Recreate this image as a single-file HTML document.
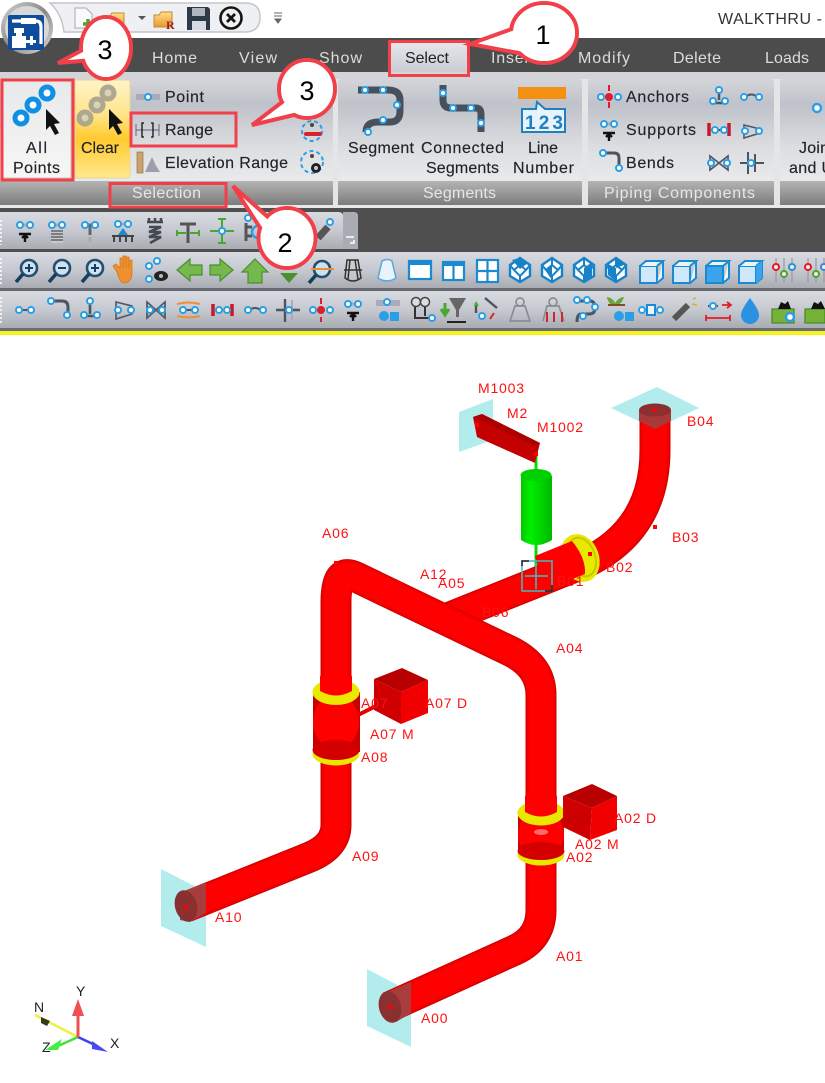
<!DOCTYPE html>
<html><head><meta charset="utf-8"><title>WALKTHRU</title>
<style>
html,body{margin:0;padding:0;background:#fff;width:825px;height:1083px;overflow:hidden}
svg{display:block;position:absolute;left:0;top:0;font-family:"Liberation Sans",Arial,sans-serif}
.soft{filter:blur(.35px)}
.t{font-size:16px;fill:#22222a;stroke:#22222a;stroke-width:.15px}
.tab{font-size:16px;fill:#dcdcdc}
.g{font-size:16px;fill:#e6e6e6}
.l{font-size:14px;fill:#f11;letter-spacing:.8px}
.ax{font-size:14px;fill:#222}
.n{font-size:27px;fill:#000;text-anchor:middle}
</style></head><body>
<svg width="825" height="1083" viewBox="0 0 825 1083" xmlns="http://www.w3.org/2000/svg">
<defs>
<linearGradient id="pn" x1="0" y1="0" x2="0" y2="1"><stop offset="0" stop-color="#d3d5da"/><stop offset=".2" stop-color="#bfc2c9"/><stop offset=".55" stop-color="#dcdee1"/><stop offset="1" stop-color="#f1f2f1"/></linearGradient>
<linearGradient id="lb" x1="0" y1="0" x2="0" y2="1"><stop offset="0" stop-color="#b4b4b4"/><stop offset="1" stop-color="#7c7c7c"/></linearGradient>
<linearGradient id="tb" x1="0" y1="0" x2="0" y2="1"><stop offset="0" stop-color="#d8dbe0"/><stop offset=".5" stop-color="#c6c9d0"/><stop offset="1" stop-color="#a9acb3"/></linearGradient>
<linearGradient id="gold" x1="0" y1="0" x2="0" y2="1"><stop offset="0" stop-color="#fff4c8"/><stop offset=".35" stop-color="#ffe48a"/><stop offset=".6" stop-color="#ffca2e"/><stop offset="1" stop-color="#ffe98e"/></linearGradient>
<linearGradient id="allb" x1="0" y1="0" x2="0" y2="1"><stop offset="0" stop-color="#e8e9eb"/><stop offset="1" stop-color="#f6f6f4"/></linearGradient>
<linearGradient id="selt" x1="0" y1="0" x2="0" y2="1"><stop offset="0" stop-color="#e5e7ea"/><stop offset="1" stop-color="#c9ccd2"/></linearGradient>
<linearGradient id="silver" x1="0" y1="0" x2="1" y2="1"><stop offset="0" stop-color="#d6d6d6"/><stop offset=".5" stop-color="#888"/><stop offset="1" stop-color="#ddd"/></linearGradient>
<linearGradient id="fold" x1="0" y1="0" x2="0" y2="1"><stop offset="0" stop-color="#ffdf8c"/><stop offset="1" stop-color="#e6982e"/></linearGradient>
<linearGradient id="grn" x1="0" y1="0" x2="1" y2="0"><stop offset="0" stop-color="#00c800"/><stop offset=".3" stop-color="#00f000"/><stop offset="1" stop-color="#00b800"/></linearGradient>
<circle id="r" r="3" fill="#fff" stroke="#2a9fe6" stroke-width="2"/>
<circle id="R" r="6" fill="#fff" stroke="#0f8fe6" stroke-width="5"/>
<g id="sup"><path d="M-9,-6H9" stroke="#aab" stroke-width="3"/><use href="#r" x="-5" y="-6"/><use href="#r" x="5" y="-6"/><path d="M-6,3H6M0,11V4M-3,7L0,4L3,7" stroke="#111" stroke-width="2.4" fill="none"/></g>
<g id="mag"><circle cx="2" cy="-3" r="8" fill="#cfe0ee" stroke="#24506f" stroke-width="2.6"/><path d="M-4,3L-11,11" stroke="#14405f" stroke-width="3.6"/></g>
<g id="gem"><path d="M0,-12L10,-5V6L0,12L-10,6V-5Z" fill="#fff" stroke="#1782c8" stroke-width="2.4"/><path d="M0,-5L6,0L0,6L-6,0ZM0,-12V-5M0,6V12M-10,-5L-6,0M10,-5L6,0" fill="none" stroke="#1782c8" stroke-width="2"/></g>
<g id="box"><path d="M-11,-6H6V11H-11Z" fill="#cfe9fb" stroke="#1b8ad0" stroke-width="2"/><path d="M-11,-6L-5,-11H12L6,-6M12,-11V6L6,11" fill="#e8f5fd" stroke="#1b8ad0" stroke-width="2"/></g>
<g id="slid"><path d="M-8,-12V12M0,-12V12M8,-12V12" stroke="#999" stroke-width="1.2"/><circle cx="-8" cy="-3" r="3" fill="#eee" stroke="#e01c2c" stroke-width="2"/><circle cx="0" cy="4" r="3" fill="#eee" stroke="#4aa62e" stroke-width="2"/><circle cx="8" cy="-3" r="3" fill="#eee" stroke="#2a8fd6" stroke-width="2"/></g>
</defs>

<g class="soft">
<!-- title area -->
<rect width="825" height="38" fill="#fff"/>
<path d="M50,3H245Q260,3 260,17Q260,32 245,32H64Q62,14 50,3Z" fill="#eef0f4" stroke="#c4c6cc" stroke-width="1.5"/>
<path d="M75,8H86L92,14V28H75Z" fill="#fafafa" stroke="#aaa"/><path d="M83,24H93M88,19V29" stroke="#4aa62e" stroke-width="3.5"/>
<path d="M105,16H110L112,13H124V28H105Z" fill="url(#fold)" stroke="#c98a30"/>
<path d="M138,16H146L142,20Z" fill="#555"/>
<path d="M154,15H159L161,12H172V27H154Z" fill="url(#fold)" stroke="#c98a30"/><text x="166" y="29" font-size="12" font-weight="bold" fill="#a02020" font-family="Liberation Serif">R</text>
<path d="M187,7H208L210,9V30H187Z" fill="#2d3a48"/><rect x="192" y="8" width="13" height="8" fill="#aeb6c0"/><rect x="192" y="21" width="14" height="9" fill="#d8dce2"/>
<circle cx="231" cy="18" r="10.5" fill="#f0f0f0" stroke="#151515" stroke-width="2.6"/><path d="M227,14L235,22M235,14L227,22" stroke="#151515" stroke-width="2.8"/>
<path d="M274,13H282M274,16H282M275,19H281L278,23Z" fill="#666" stroke="#666"/>
<text x="718" y="24" font-size="16" fill="#333" textLength="104">WALKTHRU -</text>

<!-- tab bar -->
<rect y="38" width="825" height="34" fill="#4c4c4c"/>
<rect y="72" width="825" height="135" fill="#e4e5e7"/>
<rect y="72" width="825" height="7" fill="#d2d4d8"/>
<path d="M390,72V42H467V72Z" fill="url(#selt)"/>
<text class="tab" x="152" y="63" textLength="45">Home</text>
<text class="tab" x="239" y="63" textLength="38">View</text>
<text class="tab" x="319" y="63" textLength="43">Show</text>
<text x="405" y="63" font-size="16" fill="#222" textLength="44">Select</text>
<text class="tab" x="491" y="63" textLength="44">Insert</text>
<text class="tab" x="578" y="63" textLength="52">Modify</text>
<text class="tab" x="673" y="63" textLength="48">Delete</text>
<text class="tab" x="765" y="63" textLength="44">Loads</text>

<!-- app button -->
<circle cx="27" cy="28" r="26" fill="url(#silver)"/><circle cx="27" cy="28" r="22" fill="#d8d8d8"/>
<rect x="8" y="15" width="36" height="35" rx="2" fill="#0f4c9c"/>
<path d="M12,21H36Q41,21 41,27V44" fill="none" stroke="#fff" stroke-width="3.2"/>
<rect x="21" y="18" width="15" height="6" fill="#fff"/>
<rect x="30" y="36" width="3" height="9" fill="#fff"/>
<path d="M14,28H24V33H22V36H26V40H36V43H26V48H12V36H16V33H14Z" fill="#fff"/>

<!-- ribbon panels -->
<rect x="0" y="79" width="333" height="126" rx="3" fill="url(#pn)"/>
<rect x="338" y="79" width="244" height="126" rx="3" fill="url(#pn)"/>
<rect x="588" y="79" width="186" height="126" rx="3" fill="url(#pn)"/>
<rect x="780" y="79" width="50" height="126" rx="3" fill="url(#pn)"/>
<rect x="0" y="181" width="333" height="24" fill="url(#lb)"/>
<rect x="338" y="181" width="244" height="24" fill="url(#lb)"/>
<rect x="588" y="181" width="186" height="24" fill="url(#lb)"/>
<rect x="780" y="181" width="50" height="24" fill="url(#lb)"/>

<rect x="3" y="81" width="68" height="97" fill="url(#allb)" stroke="#c9c9c0"/>
<rect x="75" y="80" width="55" height="98" rx="2" fill="url(#gold)" stroke="#e8d59a"/>

<!-- all points -->
<use href="#R" x="21" y="118"/><use href="#R" x="33" y="105"/><use href="#R" x="47" y="93"/>
<path d="M46,109L60,123L54,124L59,133L55,135L50,126L46,130Z" fill="#111"/>
<g opacity=".95"><circle cx="85" cy="118" r="6" fill="#d9d2b4" stroke="#aaa58e" stroke-width="5"/><circle cx="97" cy="105" r="6" fill="#d9d2b4" stroke="#aaa58e" stroke-width="5"/><circle cx="108" cy="93" r="6" fill="#d9d2b4" stroke="#aaa58e" stroke-width="5"/></g>
<path d="M109,109L123,123L117,124L122,133L118,135L113,126L109,130Z" fill="#111"/>
<text class="t" x="26" y="153" textLength="21">All</text>
<text class="t" x="13" y="173" textLength="47">Points</text>
<text class="t" x="81" y="153" textLength="38">Clear</text>

<rect x="136" y="94" width="24" height="6" fill="#aab"/><use href="#r" x="148" y="97"/>
<text class="t" x="165" y="102" textLength="39">Point</text>
<path d="M136,124V136M159,124V136M136,130H159" stroke="#667" stroke-width="1" fill="none"/><path d="M144,123H142V137H144M151,123H153V137H151" stroke="#111" stroke-width="1.3" fill="none"/>
<text class="t" x="165" y="135" textLength="48">Range</text>
<rect x="137" y="152" width="6" height="21" fill="#c9a36a" stroke="#8a6a3a" stroke-width=".6"/><path d="M145,172L152,157L159,172ZM150,172L155,164L160,172Z" fill="#9aa0aa"/>
<text class="t" x="165" y="168" textLength="123">Elevation Range</text>

<circle cx="312" cy="131" r="10" fill="none" stroke="#2a9fe6" stroke-width="2" stroke-dasharray="4 3"/><rect x="304" y="132" width="18" height="4" rx="2" fill="#d8232f"/><circle cx="312" cy="125" r="2" fill="#444"/>
<circle cx="312" cy="162" r="11" fill="none" stroke="#2a9fe6" stroke-width="2" stroke-dasharray="4 3"/><circle cx="316" cy="168" r="5" fill="#222"/><circle cx="316" cy="168" r="2" fill="#ccc"/><circle cx="312" cy="156" r="2" fill="#444"/>

<!-- segments -->
<path d="M358,90H388Q400,90 400,100V111Q400,122 390,122H378Q366,122 366,132" fill="none" stroke="#47505c" stroke-width="7"/>
<use href="#r" x="365" y="90"/><use href="#r" x="383" y="90"/><use href="#r" x="397" y="105"/><use href="#r" x="383" y="120"/><use href="#r" x="368" y="132"/>
<text class="t" x="348" y="153" textLength="66">Segment</text>
<path d="M443,85V100Q443,108 451,108H476Q481,108 481,114V132" fill="none" stroke="#47505c" stroke-width="7"/>
<use href="#r" x="443" y="93"/><use href="#r" x="453" y="108"/><use href="#r" x="471" y="108"/><use href="#r" x="481" y="123"/>
<text class="t" x="421" y="153" textLength="83">Connected</text>
<text class="t" x="426" y="173" textLength="73">Segments</text>
<rect x="518" y="87" width="48" height="12" fill="#f39012"/>
<path d="M522,109H536L537,102L545,109H565V132H522Z" fill="#e6f3fb" stroke="#1f7fc0" stroke-width="2"/>
<text x="525" y="129" font-size="19" font-weight="bold" fill="#1f7fc0" textLength="38">123</text>
<text class="t" x="528" y="153" textLength="30">Line</text>
<text class="t" x="513" y="173" textLength="61">Number</text>

<!-- piping -->
<path d="M609,85V91M609,102V108" stroke="#e01c2c" stroke-width="2"/><circle cx="609" cy="97" r="4" fill="#e01c2c"/><use href="#r" x="601" y="97"/><use href="#r" x="618" y="97"/>
<text class="t" x="626" y="102" textLength="63">Anchors</text>
<g transform="translate(609,130)"><use href="#sup"/></g>
<text class="t" x="626" y="135" textLength="70">Supports</text>
<path d="M601,153H614Q619,153 619,158V166" fill="none" stroke="#4a5560" stroke-width="3"/><use href="#r" x="603" y="153"/><use href="#r" x="619" y="168"/>
<text class="t" x="626" y="168" textLength="48">Bends</text>
<path d="M719,90V100M712,103H727" stroke="#4a5560" stroke-width="2.5"/><use href="#r" x="719" y="90"/><use href="#r" x="713" y="101"/><use href="#r" x="725" y="101"/>
<path d="M745,97Q752,92 757,97" stroke="#4a5560" stroke-width="2" fill="none"/><use href="#r" x="744" y="97"/><use href="#r" x="759" y="97"/>
<path d="M709,123V136M729,123V136" stroke="#c8182a" stroke-width="3.5"/><path d="M711,130H727" stroke="#555" stroke-width="2"/><use href="#r" x="715" y="130"/><use href="#r" x="724" y="130"/>
<path d="M744,125L760,129V133L744,138Z" fill="none" stroke="#556" stroke-width="1.6"/><use href="#r" x="745" y="131"/><use href="#r" x="759" y="131"/>
<path d="M710,156L728,170V156L710,170Z" fill="none" stroke="#556" stroke-width="1.7"/><use href="#r" x="711" y="163"/><use href="#r" x="727" y="163"/>
<path d="M740,163H764M748,152V174M755,154V172" stroke="#4a5560" stroke-width="2"/><use href="#r" x="751" y="163"/>

<text class="t" x="799" y="153" textLength="30">Join</text>
<text class="t" x="789" y="173" textLength="44">and U</text>
<circle cx="817" cy="108" r="4" fill="#fff" stroke="#2a9fe6" stroke-width="2.4"/>

<text class="g" x="132" y="198" textLength="69">Selection</text>
<text class="g" x="423" y="198" textLength="73">Segments</text>
<text class="g" x="604" y="198" textLength="151">Piping Components</text>

<!-- dark strip -->
<rect y="205" width="825" height="3" fill="#e8e8e8"/>
<rect y="208" width="825" height="44" fill="#4f4f4f"/>
<!-- toolbars -->
<path d="M0,212H338Q343,212 343,216V249H0Z" fill="url(#tb)"/>
<path d="M343,212H354Q358,212 358,216V249H343Z" fill="#a9acb3"/>
<path d="M346,237H354M350,243H354V240" stroke="#fff" stroke-width="1.5" fill="none"/>
<rect y="252" width="825" height="36" fill="url(#tb)"/>
<rect y="288" width="825" height="3" fill="#666a70"/>
<rect y="291" width="825" height="37" fill="url(#tb)"/>
<rect y="328" width="825" height="3" fill="#6b6e74"/>
<rect y="331" width="825" height="4" fill="#f7f21a"/>
<path d="M1,220V245M1,258V284M1,297V323" stroke="#fff" stroke-width="1.5" stroke-dasharray="2 2"/>

<!-- toolbar 1 -->
<g transform="translate(25,231)"><use href="#sup"/></g>
<g transform="translate(57,231)"><use href="#sup"/><rect x="-6" y="1" width="12" height="11" fill="#c6c9d0"/><path d="M-6,0H6M-6,3H6M-6,6H6M-6,9H6" stroke="#666" stroke-width="1.5"/></g>
<g transform="translate(90,231)"><path d="M-9,-6H9M0,-6V4" stroke="#667" stroke-width="3"/><use href="#r" x="-5" y="-6"/><use href="#r" x="5" y="-6"/><path d="M0,6V11" stroke="#aaa" stroke-width="3"/></g>
<g transform="translate(123,231)"><path d="M-9,-7H9" stroke="#aab" stroke-width="3"/><use href="#r" x="-5" y="-7"/><use href="#r" x="5" y="-7"/><path d="M0,-3L5,4H-5Z" fill="#1b8ad0"/><path d="M-11,5H11M-9,5V11M-3,5V11M3,5V11M9,5V11" stroke="#444" stroke-width="2"/></g>
<path d="M147,222H163M149,218V222M155,218V222M161,218V222M149,227H161L149,232H161L149,237H161L150,243" fill="none" stroke="#454a50" stroke-width="2.6"/>
<g transform="translate(188,231)"><path d="M-8,-7H8M0,-7V12" stroke="#555" stroke-width="3"/><path d="M-11,2H-2M2,2H11M-11,-1V5M11,-1V5" stroke="#4aa62e" stroke-width="2"/></g>
<g transform="translate(222,231)"><path d="M0,-12V12M-12,0H12" stroke="#4aa62e" stroke-width="2"/><path d="M-4,-12H4M-4,12H4" stroke="#4aa62e" stroke-width="2"/><circle r="3" fill="#fff" stroke="#2a9fe6" stroke-width="2"/></g>
<g transform="translate(252,231)"><path d="M-6,-8V10M-6,-4H0M-6,5H0" stroke="#555" stroke-width="3"/><use href="#r" x="-4" y="-13"/><circle cx="6" cy="1" r="6" fill="none" stroke="#2a9fe6" stroke-width="2.5"/></g>
<path d="M318,238L328,227" stroke="#555" stroke-width="7"/><use href="#r" x="330" y="222"/>

<!-- toolbar 2 -->
<g transform="translate(27,271)"><use href="#mag"/><path d="M-2,-3H6M2,-7V1" stroke="#14405f" stroke-width="2"/></g>
<g transform="translate(60,271)"><use href="#mag"/><path d="M-2,-3H6" stroke="#14405f" stroke-width="2"/></g>
<g transform="translate(93,271)"><use href="#mag"/><path d="M-2,-3H6M2,-7V1" stroke="#14405f" stroke-width="2"/></g>
<path d="M117,272L113,266L116,264L120,268V258H123V268V256H126V268V257H129V268V260H132V274Q131,283 124,283Q120,283 117,272Z" fill="#ef9030" stroke="#d67818" stroke-width=".8"/>
<use href="#r" x="149" y="279"/><use href="#r" x="149" y="266"/><use href="#r" x="157" y="261"/><ellipse cx="161" cy="276" rx="7" ry="5" fill="#222"/><circle cx="161" cy="276" r="2" fill="#bbb"/>
<path d="M177,270L190,259V265H202V275H190V281Z" fill="#74b84e" stroke="#4b8f2e" stroke-width="1.2"/>
<path d="M233,270L220,259V265H210V275H220V281Z" fill="#74b84e" stroke="#4b8f2e" stroke-width="1.2"/>
<path d="M255,259L268,272H262V283H248V272H242Z" fill="#74b84e" stroke="#4b8f2e" stroke-width="1.2"/>
<path d="M280,273H298L289,283Z" fill="#4b8f2e"/>
<g transform="translate(320,272)"><use href="#mag"/><path d="M-9,-3H14" stroke="#ef9030" stroke-width="2"/></g>
<path d="M347,260H358L361,278Q353,284 345,278Z M344,270H362M350,260L348,279M355,260L358,279" fill="#ccc" fill-opacity=".4" stroke="#333" stroke-width="1.5"/>
<path d="M382,261Q388,258 392,261L396,278Q387,284 378,278Z" fill="#e9f3fa" stroke="#60a8dc" stroke-width="1.6"/>
<rect x="409" y="261" width="22" height="18" fill="#fff" stroke="#1b8ad0" stroke-width="2.2"/><rect x="409" y="261" width="22" height="4" fill="#1b8ad0"/>
<rect x="443" y="262" width="21" height="18" fill="#fff" stroke="#1b8ad0" stroke-width="2.2"/><rect x="443" y="262" width="21" height="4" fill="#1b8ad0"/><path d="M453.5,262V280" stroke="#1b8ad0" stroke-width="2.2"/>
<rect x="477" y="260" width="21" height="22" fill="#fff" stroke="#1b8ad0" stroke-width="2.2"/><path d="M477,271H498M487.5,260V282" stroke="#1b8ad0" stroke-width="2.2"/>
<use href="#gem" x="520" y="270"/><use href="#gem" x="552" y="270"/><use href="#gem" x="584" y="270"/><use href="#gem" x="616" y="270"/>
<path d="M512,260L520,258L528,263L520,269Z" fill="#1782c8"/><path d="M545,270L552,264V280Z" fill="#1782c8"/><path d="M584,268L592,262V278L584,281Z" fill="#1782c8"/><path d="M608,264L616,268V281L608,275ZM616,258L624,265L616,268Z" fill="#1782c8"/>
<use href="#box" x="651" y="272"/><use href="#box" x="684" y="272"/><g transform="translate(717,272)"><use href="#box"/><path d="M-11,-6H6V11H-11Z" fill="#3aa5ee" stroke="#1b8ad0" stroke-width="2"/></g><g transform="translate(750,272)"><use href="#box"/><path d="M12,-11V6L6,11V-6Z" fill="#3aa5ee"/></g>
<use href="#slid" x="784" y="270"/><use href="#slid" x="816" y="270"/>

<!-- toolbar 3 -->
<g><path d="M17,310H31" stroke="#555" stroke-width="2"/><use href="#r" x="19" y="310"/><use href="#r" x="31" y="310"/></g>
<path d="M50,301H62Q68,301 68,307V314" fill="none" stroke="#4a5560" stroke-width="3"/><use href="#r" x="51" y="301"/><use href="#r" x="67" y="315"/>
<path d="M90,302V314M82,316H98" stroke="#4a5560" stroke-width="2.6"/><use href="#r" x="90" y="301"/><use href="#r" x="84" y="315"/><use href="#r" x="97" y="315"/>
<path d="M116,302L132,306V314L116,319Z" fill="none" stroke="#556" stroke-width="1.6"/><use href="#r" x="118" y="310"/><use href="#r" x="131" y="310"/>
<path d="M147,302L165,318V302L147,318Z" fill="none" stroke="#556" stroke-width="1.7"/><use href="#r" x="150" y="310"/><use href="#r" x="162" y="310"/>
<path d="M177,304Q188,301 200,304M177,316Q188,319 200,316" stroke="#ef9030" stroke-width="2" fill="none"/><path d="M180,310H197" stroke="#555" stroke-width="2"/><use href="#r" x="183" y="310"/><use href="#r" x="195" y="310"/>
<path d="M213,304V316M232,304V316" stroke="#c8182a" stroke-width="3.5"/><use href="#r" x="219" y="310"/><use href="#r" x="227" y="310"/>
<path d="M249,310Q255,306 261,310" stroke="#4a5560" stroke-width="2" fill="none"/><use href="#r" x="248" y="310"/><use href="#r" x="263" y="310"/>
<path d="M276,310H300M285,299V322" stroke="#4a5560" stroke-width="2.4"/><path d="M292,300V320" stroke="#aab" stroke-width="2"/><use href="#r" x="289" y="310"/>
<path d="M321,298V304M321,317V322" stroke="#e01c2c" stroke-width="2"/><circle cx="321" cy="310" r="4" fill="#e01c2c"/><use href="#r" x="313" y="310"/><use href="#r" x="330" y="310"/>
<use href="#sup" x="353" y="310"/>
<rect x="376" y="300" width="24" height="6" fill="#aab"/><use href="#r" x="387" y="302"/><circle cx="384" cy="316" r="5" fill="#2a9fe6"/><rect x="390" y="312" width="9" height="9" fill="#2a9fe6"/>
<g transform="translate(421,310)"><circle cx="-5" cy="-8" r="4.5" fill="#ddd" stroke="#444" stroke-width="1.5"/><circle cx="4" cy="-8" r="4.5" fill="#ddd" stroke="#444" stroke-width="1.5"/><path d="M-6,-3V8H10M4,-3V6" fill="none" stroke="#333" stroke-width="2"/><use href="#r" x="11" y="8"/></g>
<path d="M449,298H466L459,310V317H456V310Z" fill="#666"/><path d="M447,322H466" stroke="#222" stroke-width="2"/><path d="M445,303V313M441,309L445,315L449,309" stroke="#4aa62e" stroke-width="3" fill="none"/>
<path d="M476,303V313M485,298L497,308" stroke="#4a5560" stroke-width="2.4" fill="none"/><path d="M474,306L476,301L479,306" fill="#4aa62e"/><use href="#r" x="482" y="316"/><path d="M490,319L494,313" stroke="#d8232f" stroke-width="2"/>
<path d="M510,321L515,306H525L530,321Z" fill="none" stroke="#8a8d92" stroke-width="1.7"/><circle cx="520" cy="302" r="4" fill="none" stroke="#8a8d92" stroke-width="1.7"/>
<path d="M543,321L547,306H559L564,321" fill="none" stroke="#8a8d92" stroke-width="1.7"/><circle cx="553" cy="302" r="4" fill="none" stroke="#8a8d92" stroke-width="1.7"/><path d="M547,312V322M554,312V322M562,312V322" stroke="#d8232f" stroke-width="2"/>
<path d="M578,301H590Q595,301 595,308Q595,314 589,314H581Q577,314 577,322" fill="none" stroke="#4a5560" stroke-width="3"/><use href="#r" x="577" y="300"/><use href="#r" x="587" y="300"/><use href="#r" x="595" y="307"/><use href="#r" x="583" y="316"/>
<path d="M610,304Q606,297 607,297Q613,298 615,303Q619,297 624,297Q622,304 617,305" fill="#6aa63a"/><path d="M608,305H625" stroke="#7a5028" stroke-width="2"/><circle cx="619" cy="316" r="5" fill="#2a9fe6"/><rect x="625" y="312" width="9" height="9" fill="#2a9fe6"/>
<path d="M640,310H664" stroke="#1b8ad0" stroke-width="1.6"/><rect x="647" y="305" width="8" height="10" fill="#eaf4fb" stroke="#1b8ad0" stroke-width="2"/><use href="#r" x="642" y="310"/><use href="#r" x="660" y="310"/>
<path d="M674,319L688,305" stroke="#555" stroke-width="6"/><path d="M693,299L696,298M692,304L697,305" stroke="#d8b030" stroke-width="1.5"/>
<path d="M708,306H718" stroke="#555" stroke-width="2"/><use href="#r" x="713" y="306"/><path d="M722,305H730M727,302L731,305L727,308M706,318H730M706,315V321M730,315V321" stroke="#e01c2c" stroke-width="1.8" fill="none"/>
<path d="M750,298Q759,310 759,315A9,9 0 0 1 741,315Q741,310 750,298Z" fill="#2a92e0"/>
<path d="M772,309H794V323H772Z" fill="#76b13a" stroke="#4c8a20" stroke-width="1.3"/><path d="M778,309L781,302L785,304L788,301L791,309Z" fill="#111"/><circle cx="790" cy="317" r="4" fill="#fff" stroke="#2a9fe6" stroke-width="2.5"/>
<path d="M805,309H825V323H805Z" fill="#76b13a" stroke="#4c8a20" stroke-width="1.3"/><path d="M811,309L814,302L818,304L821,301L825,309Z" fill="#111"/>
</g>

<!-- 3D model -->
<g>
<polygon points="657,387 699,408 655,429 611,408" fill="#b2ecec"/>
<polygon points="161,869 206,892 206,947 161,926" fill="#b2ecec"/>
<polygon points="367,969 411,992 411,1047 367,1026" fill="#b2ecec"/>
<polygon points="459,412 493,399 493,440 459,452" fill="#b2ecec"/>

<!-- green support -->
<path d="M536,455V570" stroke="#00e000" stroke-width="3"/>
<path d="M521,476Q536,466 552,476V540Q536,550 521,540Z" fill="url(#grn)"/>
<ellipse cx="536" cy="475" rx="15.5" ry="6" fill="#00d000"/>

<!-- beam -->
<polygon points="473,417 482,414 540,443 535,463 477,437" fill="#c40000"/>
<polygon points="473,417 482,414 540,443 533,445" fill="#ac0000"/>
<rect x="475" y="423" width="4" height="4" fill="#f00"/><rect x="534" y="452" width="4" height="4" fill="#f00"/>

<!-- B pipe -->
<g fill="none" stroke-linecap="butt">
<path d="M440,621L585,563Q655,530 655,450V408" stroke="#cc0000" stroke-width="31"/>
<path d="M440,621L585,563Q655,530 655,450V408" stroke="#f20000" stroke-width="29"/>
<path d="M440,621L585,563Q655,530 655,450V408" stroke="#ff0000" stroke-width="24"/>
</g>
<path d="M639,410Q655,402 671,410V421L655,429L639,421Z" fill="#a93838"/>
<ellipse cx="655" cy="410" rx="16" ry="6.5" fill="#8b3030"/><rect x="653" y="408" width="4" height="4" fill="#f00"/>
<!-- B02 flange -->
<ellipse cx="580" cy="558" rx="19" ry="24.5" fill="#e8e800" transform="rotate(-20 580 558)"/>
<ellipse cx="582" cy="557" rx="13" ry="20" fill="none" stroke="#c8c800" stroke-width="2" transform="rotate(-20 582 557)"/>
<path d="M535,556L572,541Q586,558 585,574L545,590Z" fill="#f00"/>
<rect x="588" y="552" width="4" height="4" fill="#f00"/>

<!-- A pipe -->
<g fill="none" stroke-linecap="butt" stroke-linejoin="round">
<path d="M186,907L310,857Q336,846 336,825V602C336,578 342,570 356,577L510,651C530,661 541,675 541,695V910Q541,938 515,950L389,1007" stroke="#cc0000" stroke-width="31"/>
<path d="M186,907L310,857Q336,846 336,825V602C336,578 342,570 356,577L510,651C530,661 541,675 541,695V910Q541,938 515,950L389,1007" stroke="#f20000" stroke-width="29"/>
<path d="M186,907L310,857Q336,846 336,825V602C336,578 342,570 356,577L510,651C530,661 541,675 541,695V910Q541,938 515,950L389,1007" stroke="#ff0000" stroke-width="24"/>
</g>
<!-- ends -->
<polygon points="180,893 206,882 206,913 190,922 180,920" fill="#a93c3c"/>
<ellipse cx="186" cy="906" rx="11" ry="16" fill="#8b3030" transform="rotate(-15 186 906)"/><rect x="184" y="905" width="4" height="4" fill="#f00"/>
<polygon points="385,993 411,982 411,1013 396,1022 385,1018" fill="#a93c3c"/>
<ellipse cx="390" cy="1007" rx="11" ry="16" fill="#8b3030" transform="rotate(-15 390 1007)"/><rect x="388" y="1005" width="4" height="4" fill="#f00"/>

<!-- Valve A07 -->
<path d="M313,692H360V752H313Z" fill="#c80000"/>
<ellipse cx="336" cy="722" rx="23" ry="27" fill="#f00"/>
<ellipse cx="336" cy="692" rx="23.5" ry="13" fill="#e8e800"/>
<path d="M320,676H352V691Q336,700 320,691Z" fill="#f00"/>
<ellipse cx="336" cy="754" rx="23.5" ry="11.5" fill="#e8e800"/>
<ellipse cx="336" cy="750" rx="23.5" ry="10" fill="#d40000"/>
<!-- Valve A02 -->
<path d="M518,812H564V852H518Z" fill="#c80000"/>
<ellipse cx="541" cy="834" rx="23" ry="24" fill="#f00"/>
<ellipse cx="541" cy="813" rx="23.5" ry="12.5" fill="#e8e800"/>
<path d="M525,796H557V812Q541,821 525,812Z" fill="#f00"/>
<ellipse cx="541" cy="832" rx="7" ry="3" fill="#ff6a6a"/>
<ellipse cx="541" cy="855" rx="23.5" ry="10.5" fill="#e8e800"/>
<ellipse cx="541" cy="851" rx="23.5" ry="9" fill="#d40000"/>
<!-- cubes -->
<path d="M358,715L390,699" stroke="#e60000" stroke-width="4"/>
<path d="M564,823L590,816" stroke="#e60000" stroke-width="4"/>
<polygon points="402,668 428,680 401,692 374,679" fill="#b80000"/>
<polygon points="374,679 401,692 401,724 374,710" fill="#d00000"/>
<polygon points="401,692 428,680 428,713 401,724" fill="#f00000"/>
<polygon points="592,784 617,796 592,808 563,796" fill="#b80000"/>
<polygon points="563,796 592,808 590,840 563,827" fill="#d00000"/>
<polygon points="592,808 617,796 617,830 590,840" fill="#f00000"/>

<!-- crosshair -->
<rect x="522" y="561" width="30" height="30" fill="none" stroke="#3cc0c0" stroke-width="1.5"/>
<path d="M536,563V589M525,576H548" stroke="#3cc0c0" stroke-width="1.5"/>
<path d="M522,566V561H529M545,591H552V585" stroke="#222" stroke-width="1.5" fill="none"/>

<!-- points -->
<rect x="334" y="561" width="4" height="4" fill="#f00"/>
<rect x="653" y="525" width="4" height="4" fill="#f00"/>

<!-- labels -->
<text class="l" x="478" y="393">M1003</text>
<text class="l" x="507" y="418">M2</text>
<text class="l" x="537" y="432">M1002</text>
<text class="l" x="687" y="426">B04</text>
<text class="l" x="672" y="542">B03</text>
<text class="l" x="606" y="572">B02</text>
<text class="l" x="557" y="586">B01</text>
<text class="l" x="322" y="538">A06</text>
<text class="l" x="420" y="579">A12</text>
<text class="l" x="438" y="588">A05</text>
<text class="l" x="482" y="617">B06</text>
<text class="l" x="556" y="653">A04</text>
<text class="l" x="361" y="708">A07</text>
<text class="l" x="425" y="708">A07 D</text>
<text class="l" x="370" y="739">A07 M</text>
<text class="l" x="361" y="762">A08</text>
<text class="l" x="352" y="861">A09</text>
<text x="563" y="824" font-size="14" fill="#c00000" letter-spacing=".8">A03</text>
<text class="l" x="614" y="823">A02 D</text>
<text class="l" x="575" y="849">A02 M</text>
<text class="l" x="566" y="862">A02</text>
<text class="l" x="215" y="922">A10</text>
<text class="l" x="556" y="961">A01</text>
<text class="l" x="421" y="1023">A00</text>

<!-- axes -->
<path d="M78,1037L35,1015" stroke="#f0f040" stroke-width="2.5"/>
<path d="M41,1017L50,1021L47,1026L41,1023Z" fill="#3a3a10"/>
<path d="M78,1037L58,1046" stroke="#40e040" stroke-width="2.5"/>
<path d="M62,1039L45,1050L58,1050Z" fill="#40f040"/>
<path d="M78,1037L95,1045" stroke="#4040f0" stroke-width="2.5"/>
<path d="M92,1041L108,1052L92,1049Z" fill="#4a4af5"/>
<path d="M78,1037V1010" stroke="#f05050" stroke-width="3"/>
<path d="M78,999L84,1016H72Z" fill="#f05050"/>
<text class="ax" x="76" y="996">Y</text>
<text class="ax" x="34" y="1012">N</text>
<text class="ax" x="42" y="1052" fill="#111">Z</text>
<text class="ax" x="110" y="1048">X</text>
</g>

<!-- red boxes + callouts -->
<g fill="none" stroke="#f2404a" stroke-width="3">
<rect x="389.5" y="41.5" width="79" height="34"/>
<rect x="2" y="80" width="71" height="100"/>
<rect x="131" y="113" width="105" height="33"/>
<rect x="110" y="183.5" width="116" height="23.5"/>
</g>
<g stroke="#f2404a" stroke-width="4" fill="#fff" stroke-linejoin="miter">
<ellipse cx="544" cy="33" rx="33" ry="30"/>
<path d="M520,26L470,44L524,54"/>
<ellipse cx="106" cy="48" rx="25" ry="31"/>
<path d="M90,46L58,63L92,60"/>
<ellipse cx="307" cy="89" rx="28" ry="29"/>
<path d="M290,96L252,125L298,114"/>
<ellipse cx="287" cy="238" rx="28.5" ry="30"/>
<path d="M278,226L233,186L268,240"/>
</g>
<g fill="#fff">
<ellipse cx="544" cy="33" rx="31" ry="28"/>
<ellipse cx="106" cy="48" rx="23" ry="29"/>
<ellipse cx="307" cy="89" rx="26" ry="27"/>
<ellipse cx="287" cy="238" rx="26.5" ry="28"/>
</g>
<text class="n" x="543" y="44">1</text>
<text class="n" x="105" y="59">3</text>
<text class="n" x="307" y="100">3</text>
<text class="n" x="285" y="252">2</text>
</svg>
</body></html>
